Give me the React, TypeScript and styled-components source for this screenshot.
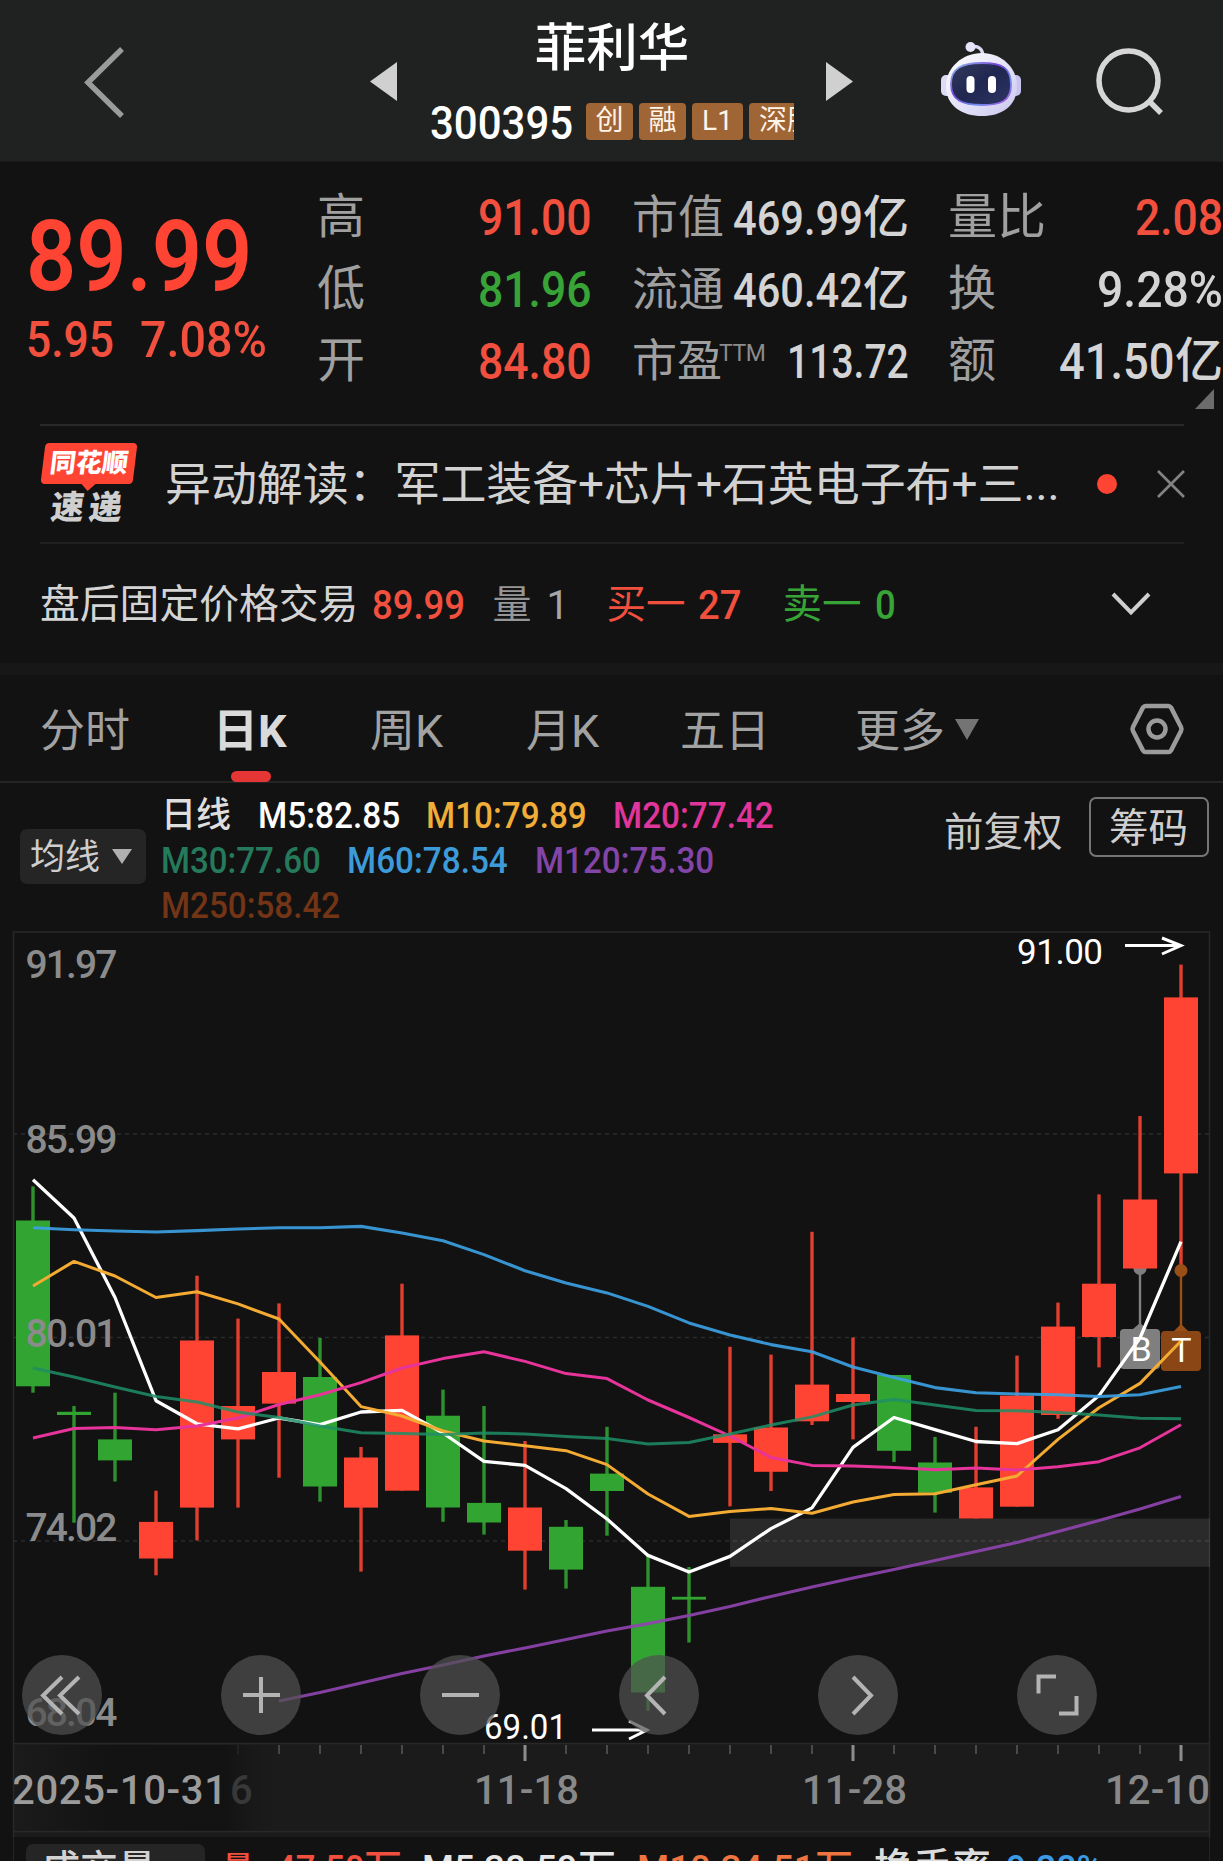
import React, { useLayoutEffect, useRef, useState } from 'react';
import styled, { createGlobalStyle } from 'styled-components';

const RED = '#ff4433';
const SOFT_RED = '#f2503f';
const GREEN = '#31a431';
const FONT = "Roboto, 'Noto Sans CJK SC', sans-serif";

const GlobalStyle = createGlobalStyle`
  body { margin: 0; background: #121212; overflow: hidden; }
  * { box-sizing: border-box; }
`;

const Page = styled.main`
  width: 1223px;
  height: 1861px;
  overflow: hidden;
  display: flex;
  flex-direction: column;
  background: #121212;
  color: #d2d2d2;
  font-family: ${FONT};
`;

/* ---------- text ---------- */

type TextProps = { $size: number; $color?: string; $weight?: number; $ml?: number; $up?: number; $mt?: number };

const Text = styled.span<TextProps>`
  display: block;
  flex: none;
  white-space: nowrap;
  line-height: 1;
  font-size: ${(p) => p.$size}px;
  font-weight: ${(p) => p.$weight ?? 400};
  color: ${(p) => p.$color ?? 'inherit'};
  margin-left: ${(p) => p.$ml ?? 0}px;
  margin-top: ${(p) => p.$mt ?? 0}px;
  margin-bottom: ${(p) => p.$up ?? 0}px;
`;

const FitBox = styled(Text)<{ $w: number }>`
  width: ${(p) => p.$w}px;
`;

const FitInner = styled.span`
  display: inline-block;
  transform-origin: 0 50%;
`;

type FitProps = { w: number; size: number; color?: string; weight?: number; ml?: number; mt?: number; up?: number; children: string };

/* Condenses a figure so that it always fills its column width. */
function Fit({ w, size, color, weight = 500, ml, mt, up, children }: FitProps) {
  const ref = useRef<HTMLSpanElement>(null);
  const [scale, setScale] = useState(1);
  useLayoutEffect(() => {
    if (ref.current) setScale(w / ref.current.offsetWidth);
  }, [w, size, children]);
  return (
    <FitBox $w={w} $size={size} $color={color} $weight={weight} $ml={ml} $mt={mt} $up={up}>
      <FitInner ref={ref} style={{ transform: `scaleX(${scale})` }}>{children}</FitInner>
    </FitBox>
  );
}

/* ---------- header ---------- */

const Header = styled.header`
  flex: none;
  height: 162px;
  background: #202221;
  border-bottom: 1px solid #1a1b1b;
  display: flex;
  align-items: flex-start;
`;

const Icon = styled.svg<{ $ml?: number; $mt?: number }>`
  display: block;
  flex: none;
  overflow: visible;
  margin-left: ${(p) => p.$ml ?? 0}px;
  margin-top: ${(p) => p.$mt ?? 0}px;
`;

const TitleBlock = styled.div`
  width: 364px;
  margin-left: 32px;
  padding-top: 23px;
  display: flex;
  flex-direction: column;
  align-items: center;
`;

const CodeRow = styled.div`
  width: 364px;
  height: 48px;
  margin-top: 23px;
  display: flex;
  align-items: center;
  overflow: hidden;
`;

const Tag = styled.span<{ $w: number; $ml: number }>`
  flex: none;
  width: ${(p) => p.$w}px;
  height: 37px;
  margin-left: ${(p) => p.$ml}px;
  border-radius: 4px;
  background: #a06534;
  color: #fff4e8;
  font-size: 28px;
  line-height: 35px;
  text-align: center;
  white-space: nowrap;
  overflow: hidden;
`;

const ClippedTag = styled(Tag)`
  border-radius: 4px 0 0 4px;
  text-align: left;
  padding-left: 10px;
`;

function Robot() {
  return (
    <Icon $ml={87} $mt={41} width="82" height="76" viewBox="0 0 82 76">
      <defs>
        <linearGradient id="shell" x1="0" y1="0" x2="1" y2="1">
          <stop offset="0" stopColor="#ffffff" />
          <stop offset=".55" stopColor="#e3e1f7" />
          <stop offset="1" stopColor="#c9c6ee" />
        </linearGradient>
        <linearGradient id="rim" x1="0" y1="0" x2="1" y2="1">
          <stop offset="0" stopColor="#8fc8f0" />
          <stop offset=".4" stopColor="#7a45d8" />
          <stop offset=".7" stopColor="#6a8cf0" />
          <stop offset="1" stopColor="#b04be0" />
        </linearGradient>
        <linearGradient id="visor" x1="0" y1="0" x2="1" y2="1">
          <stop offset="0" stopColor="#343a5c" />
          <stop offset=".5" stopColor="#202750" />
          <stop offset="1" stopColor="#2d3565" />
        </linearGradient>
      </defs>
      <path d="M30 6c7-2 12 2 12 10" fill="none" stroke="#dcdaf2" strokeWidth="3.5" />
      <circle cx="29.500" cy="6" r="5" fill="#e6e4fb" />
      <rect x="0" y="34" width="12" height="21" rx="5" fill="#dcdaf4" />
      <rect x="69" y="34" width="11" height="21" rx="5" fill="#c6c3ee" />
      <path d="M41 12C60 12 76 26 76 45C76 65 61 75 41 75C21 75 5 65 5 45C5 26 22 12 41 12Z" fill="url(#shell)" />
      <path d="M41 22C62 22 70 27 70 44C70 60 60 64 41 64C21 64 10 59 10 43C10 27 21 22 41 22Z" fill="url(#visor)" stroke="url(#rim)" strokeWidth="1.800" />
      <rect x="25.500" y="35" width="8" height="17" rx="4" fill="#fff" />
      <rect x="47" y="35" width="8" height="17" rx="4" fill="#fff" />
    </Icon>
  );
}

/* ---------- quote ---------- */

const Quote = styled.section`
  flex: none;
  height: 262px;
  padding: 19px 0 0 26px;
  display: flex;
`;

const PriceCol = styled.div`
  width: 291px;
  padding-top: 26px;
`;

const ChangeRow = styled.div`
  display: flex;
  margin-top: 9px;
`;

const StatCol = styled.div<{ $w: number; $gap?: number }>`
  width: ${(p) => p.$w}px;
  margin-left: ${(p) => p.$gap ?? 0}px;
`;

const StatRow = styled.div`
  height: 72px;
  display: flex;
  align-items: center;
  justify-content: space-between;
`;

const Group = styled.div`
  display: flex;
  align-items: center;
`;

const Ttm = styled.span`
  font-size: 23px;
  line-height: 1;
  color: #8c8c8c;
  letter-spacing: -0.5px;
  margin: 0 0 16px -3px;
`;

const CornerMark = styled.div`
  width: 0;
  height: 0;
  margin: -8px 9px 0 auto;
  border-left: 19px solid transparent;
  border-bottom: 20px solid #6c6c6c;
`;

/* ---------- news and after-hours ---------- */

const NewsRow = styled.section`
  flex: none;
  height: 120px;
  margin: 0 39px 0 40px;
  border-top: 2px solid #292929;
  border-bottom: 2px solid #202020;
  display: flex;
  align-items: center;
`;

const Logo = styled.div`
  width: 98px;
  height: 82px;
  margin-top: -1px;
  display: flex;
  flex-direction: column;
  align-items: center;
`;

const LogoTop = styled.div`
  position: relative;
  width: 92px;
  height: 41px;
  border-radius: 4px;
  background: ${RED};
  color: #fff;
  font-size: 26px;
  line-height: 41px;
  font-weight: 900;
  text-align: center;
  transform: skewX(-7deg);
  &::after {
    content: '';
    position: absolute;
    left: 40px;
    bottom: -7px;
    border: 8px solid transparent;
    border-top-color: ${RED};
    border-bottom: 0;
  }
`;

const LogoBottom = styled.div`
  color: #cfcfcf;
  font-size: 33px;
  line-height: 36px;
  margin-top: 6px;
  margin-right: 4px;
  font-weight: 900;
  letter-spacing: 5px;
  padding-left: 4px;
  transform: skewX(-7deg);
`;

const Dot = styled.i`
  width: 20px;
  height: 20px;
  border-radius: 50%;
  margin: -1px 0 0 37px;
  background: ${RED};
`;

const AfterHours = styled.section`
  flex: none;
  height: 119px;
  padding: 3px 0 0 40px;
  display: flex;
  align-items: center;
`;

const Band = styled.div`
  flex: none;
  height: 12px;
  background: #171717;
`;

/* ---------- tabs ---------- */

const Tabs = styled.nav`
  flex: none;
  height: 108px;
  border-bottom: 2px solid #252525;
  display: flex;
`;

const Tab = styled.div<{ $ml: number; $w: number; $active?: boolean }>`
  position: relative;
  flex: none;
  width: ${(p) => p.$w}px;
  margin-left: ${(p) => p.$ml}px;
  font-size: 45px;
  line-height: 113px;
  white-space: nowrap;
  color: ${(p) => (p.$active ? '#dadada' : '#a2a2a2')};
  font-weight: ${(p) => (p.$active ? 700 : 400)};
  &::after {
    content: '';
    display: ${(p) => (p.$active ? 'block' : 'none')};
    position: absolute;
    left: 18px;
    bottom: -1px;
    width: 40px;
    height: 11px;
    border-radius: 6px;
    background: #e63535;
  }
`;

const Caret = styled.i<{ $w: number; $h: number; $color: string; $ml: number; $mt?: number }>`
  width: 0;
  height: 0;
  margin-left: ${(p) => p.$ml}px;
  margin-top: ${(p) => p.$mt ?? 0}px;
  border: ${(p) => p.$w / 2}px solid transparent;
  border-bottom: 0;
  border-top: ${(p) => p.$h}px solid ${(p) => p.$color};
`;

/* ---------- legend ---------- */

const Legend = styled.section`
  flex: none;
  height: 148px;
  padding-top: 10px;
  display: flex;
  align-items: flex-start;
`;

const MaButton = styled.div`
  width: 126px;
  height: 55px;
  margin: 36px 0 0 20px;
  padding-left: 10px;
  border-radius: 7px;
  background: #252525;
  color: #cecece;
  display: flex;
  align-items: center;
`;

const MaList = styled.div`
  width: 760px;
  margin-left: 15px;
`;

const MaRow = styled.div`
  display: flex;
  align-items: center;
  height: 45px;
`;

const ChipButton = styled.div`
  width: 120px;
  height: 60px;
  margin: 4px 0 0 26px;
  border: 2px solid #757575;
  border-radius: 7px;
  display: flex;
  align-items: center;
  justify-content: center;
`;

/* ---------- chart ---------- */

const ChartWrap = styled.section`
  flex: none;
  position: relative;
  height: 906px;
`;

const ChartSvg = styled.svg`
  display: block;
  font-family: ${FONT};
`;

const Controls = styled.div`
  position: absolute;
  left: 21.5px;
  top: 724px;
  display: flex;
  gap: 119px;
`;

const RoundButton = styled.button`
  width: 80px;
  height: 80px;
  padding: 0;
  border: 0;
  border-radius: 50%;
  background: rgba(80, 80, 80, 0.72);
  svg { display: block; }
`;

const STEP = 41;
const X0 = 33;
const FLOOR = 1744;
const at = (i: number) => X0 + STEP * i;

type Candle = [up: 0 | 1, high: number, top: number, bottom: number, low: number];

const CANDLES: Candle[] = [
  [0, 1186.4, 1220.5, 1386.3, 1392.7],
  [0, 1406, 1411.8, 1415, 1522.7],
  [0, 1392.7, 1439.4, 1460.4, 1481.5],
  [1, 1490.7, 1521.9, 1558.5, 1575.3],
  [1, 1275.7, 1340.5, 1507.6, 1540.4],
  [1, 1318.6, 1406, 1439.4, 1507.6],
  [1, 1303.4, 1372, 1403.6, 1477.7],
  [0, 1338, 1377, 1486.5, 1501.7],
  [1, 1447, 1457.5, 1507.6, 1571.6],
  [1, 1283.7, 1335.4, 1490.7, 1490.7],
  [0, 1389.6, 1415.7, 1507.5, 1521.8],
  [0, 1406, 1502.9, 1522.5, 1534.6],
  [1, 1441, 1507.5, 1550.7, 1589.6],
  [0, 1520, 1526.8, 1569.6, 1588.6],
  [0, 1426.8, 1473.6, 1491, 1535.7],
  [0, 1556, 1586.8, 1692.5, 1710.7],
  [0, 1567, 1596.8, 1599.6, 1642.5],
  [1, 1346.8, 1434.3, 1442.9, 1506.4],
  [1, 1354.6, 1427.5, 1471.8, 1491],
  [1, 1231.8, 1384.6, 1421.3, 1425],
  [1, 1337.5, 1394, 1402, 1439.4],
  [0, 1375, 1375, 1450.8, 1462],
  [0, 1436.9, 1462.5, 1492.8, 1512.6],
  [1, 1426.8, 1487.4, 1518.5, 1518.5],
  [1, 1355.6, 1395.6, 1506.7, 1506.7],
  [1, 1302.6, 1326.6, 1415, 1418.8],
  [1, 1194.4, 1283.7, 1337, 1367.4],
  [1, 1116, 1199.5, 1268.5, 1268.5],
  [1, 964.6, 997.4, 1173.4, 1271.5],
];

type Line = { color: string; from: number; width: number; ys: number[] };

const LINES: Line[] = [
  { color: '#ffffff', from: 0, width: 3.3, ys: [1179.7, 1218, 1297.5, 1400.7, 1423.8, 1428.9, 1418, 1424.7, 1412, 1410.4, 1433, 1461.4, 1465.4, 1488.6, 1519, 1555.4, 1572, 1556.4, 1528.6, 1507.9, 1447.4, 1417.5, 1429.7, 1441.5, 1443.6, 1429.7, 1395.6, 1338, 1241.6] },
  { color: '#f3ab33', from: 0, width: 3, ys: [1286, 1261.4, 1276, 1297.5, 1291.7, 1303.9, 1319, 1362, 1406.6, 1416, 1431, 1441, 1445.7, 1450.7, 1464.6, 1494, 1516.4, 1511.4, 1508.6, 1513.2, 1502, 1494.5, 1493.7, 1484.8, 1476, 1439.4, 1407.8, 1383.4, 1341] },
  { color: '#e6349a', from: 0, width: 3, ys: [1438, 1428.5, 1427.6, 1429.7, 1426, 1418, 1404.5, 1394.8, 1382.6, 1368, 1358.6, 1351.8, 1361.4, 1373.6, 1378.6, 1400, 1417.5, 1436, 1457.5, 1465.4, 1466, 1467.6, 1469.7, 1468, 1470, 1466.8, 1461.7, 1447.8, 1424.7] },
  { color: 'rgba(30,142,102,.85)', from: 0, width: 3, ys: [1368, 1377, 1387, 1396.5, 1402, 1412, 1417.5, 1426, 1432.7, 1433.5, 1434.6, 1432.9, 1434, 1436.4, 1438.6, 1444, 1442.5, 1434, 1425, 1416.9, 1405, 1399.4, 1404.9, 1410.4, 1410.8, 1412.5, 1415, 1418.3, 1418.8] },
  { color: 'rgba(60,160,226,.92)', from: 0, width: 3.1, ys: [1227.7, 1229.8, 1231, 1232, 1230.6, 1229, 1227.7, 1227.7, 1226.4, 1233, 1240.7, 1254.6, 1270.7, 1282.9, 1292.9, 1306.4, 1322.9, 1335, 1344.6, 1351.8, 1367, 1377.5, 1387.6, 1392.7, 1394, 1394.8, 1396.5, 1394.8, 1386.4] },
  { color: 'rgba(142,68,173,.92)', from: 6, width: 3.1, ys: [1701, 1692.5, 1683, 1673.5, 1665, 1656, 1647.9, 1639.5, 1631, 1623.6, 1615.4, 1606.4, 1596.4, 1587, 1578, 1569.5, 1560.6, 1551.5, 1542.5, 1531.5, 1520.6, 1509, 1496.6] },
];

const PRICES: [string, number][] = [['91.97', 964], ['85.99', 1139], ['80.01', 1333], ['74.02', 1527], ['68.04', 1711.5]];

function Chart() {
  return (
    <ChartSvg width="1223" height="906" viewBox="0 931 1223 906">
      <defs>
        <linearGradient id="fade" x1="0" y1="0" x2="1" y2="0">
          <stop offset="0" stopColor="#1b1b1b" />
          <stop offset=".35" stopColor="#131313" />
          <stop offset=".78" stopColor="#121212" stopOpacity=".95" />
          <stop offset="1" stopColor="#1b1b1b" stopOpacity="0" />
        </linearGradient>
      </defs>
      <rect x="13" y={FLOOR} width="1197" height="93" fill="#1b1b1b" />
      {[1134, 1337.5, 1541].map((y) => (
        <line key={y} x1="13" x2="1210" y1={y} y2={y} stroke="#2c2c2c" strokeWidth="1.5" strokeDasharray="4 4" />
      ))}
      <rect x="13.500" y="932" width="1196" height="811.500" fill="none" stroke="#282828" strokeWidth="1.500" />
      <rect x="730" y="1518.600" width="480" height="48.200" fill="#fff" fillOpacity=".1" />

      <g fill="#7f7f7f">
        <circle cx={at(27)} cy="1268.500" r="6.500" />
        <rect x={at(27) - 1.2} y="1268" width="2.400" height="58" />
      </g>
      {CANDLES.map(([up, high, top, bottom, low], i) => (
        <g key={i} fill={up ? RED : GREEN}>
          <rect x={at(i) - 1.7} y={high} width="3.400" height={low - high} fillOpacity=".88" />
          <rect x={at(i) - 17} y={top} width="34" height={bottom - top} />
        </g>
      ))}
      <g fill="#9a4f17">
        <circle cx={at(28)} cy="1270.500" r="6.500" />
        <rect x={at(28) - 1.2} y="1270" width="2.400" height="56" />
        <path d="M1174 1331l7-7 7 7z" />
        <rect x="1161" y="1331" width="40" height="40" rx="4" fill="#8a4614" />
      </g>
      <path d="M1133 1329l7-6 7 6z" fill="#7f7f7f" />
      <rect x="1120" y="1329" width="40" height="40" rx="4" fill="#7f7f7f" />

      <g fill="#fff" fontSize="34" textAnchor="middle">
        <text x="1141" y="1361">B</text>
        <text x="1181.500" y="1362">T</text>
      </g>
      <g fill="#8b8b8b" fontSize="39" fontWeight="500">
        {PRICES.map(([label, y]) => (
          <text key={label} x="25.500" y={y + 14} textLength="92">{label}</text>
        ))}
      </g>
      {LINES.map(({ color, from, width, ys }) => (
        <polyline
          key={color}
          fill="none"
          stroke={color}
          strokeWidth={width}
          strokeLinejoin="round"
          points={ys.map((y, i) => `${at(from + i)},${y}`).join(' ')}
        />
      ))}

      <g fill="#fff" fontSize="35">
        <text x="1017" y="964" textLength="86">91.00</text>
        <text x="484" y="1738.500" textLength="83" lengthAdjust="spacingAndGlyphs">69.01</text>
      </g>
      <g fill="none" stroke="#fff" strokeWidth="3">
        <path d="M1125 945.500h56M1162 938l19 7.500l-19 8.500" />
        <path d="M592 1730h55M629 1721l18 9l-18 9" />
      </g>

      {CANDLES.map((_, i) => {
        const major = i === 12 || i === 20 || i === 28;
        return i > 4 ? (
          <rect key={i} x={at(i) - (major ? 1.5 : 1)} y="1745" width={major ? 3 : 2} height={major ? 16 : 9} fill={major ? '#8c8c8c' : '#4a4a4a'} />
        ) : null;
      })}
      <g fill="#888" fontSize="40" fontWeight="500">
        <text x="474" y="1803.500" textLength="105">11-18</text>
        <text x="802" y="1803.500" textLength="105">11-28</text>
        <text x="1105" y="1803.500" textLength="105">12-10</text>
      </g>
      <rect x="14" y="1745" width="271" height="86" fill="url(#fade)" />
      <text x="230" y="1803.500" fontSize="40" fontWeight="500" fill="#383838">6</text>
      <text x="12" y="1803.500" fontSize="40" fontWeight="500" fill="#9b9b9b" textLength="215">2025-10-31</text>
      <path d="M13.500 1744V1837M1209.500 1744V1837M13 1831.500H1210" stroke="#282828" strokeWidth="1.500" fill="none" />
    </ChartSvg>
  );
}

const CONTROL_PATHS = [
  'M40 22L21 40.500L40 59M57 22L38 40.500L57 59',
  'M40 22V58M22 40H59',
  'M22 40H59',
  'M46 22L28 40.500L46 59',
  'M35 22L53 40.500L35 59',
  'M21.500 38.500V21.500H39M42 58.500H59.500V41',
];

/* ---------- volume ---------- */

const VolumeRow = styled.section`
  flex: none;
  height: 24px;
  margin: 0 13px;
  border: solid #242424;
  border-width: 0 1px;
  overflow: hidden;
  display: flex;
  align-items: flex-start;
  padding: 7px 0 0 12px;
`;

const VolumeButton = styled.div`
  flex: none;
  width: 179px;
  height: 55px;
  padding: 6px 0 0 16px;
  border-radius: 7px;
  background: #252525;
`;

const VolumeValues = styled.div`
  display: flex;
  align-items: center;
  height: 48px;
`;

const LABEL = '#a0a0a0';
const VALUE = '#d4d4d4';

export default function App() {
  return (
    <Page>
      <GlobalStyle />
      <Header>
        <Icon $ml={84} $mt={47} width="41" height="71" viewBox="0 0 41 71" fill="none" stroke="#9b9b9b" strokeWidth="5.500">
          <path d="M38 2L4 35.500L38 69" />
        </Icon>
        <Icon $ml={245} $mt={62} width="28" height="39" viewBox="0 0 28 39"><path d="M27 0V39L0 19.500Z" fill="#d0d0d0" /></Icon>
        <TitleBlock>
          <Text $size={51.5} $weight={500} $color="#fff">菲利华</Text>
          <CodeRow>
            <Fit w={143} size={47} color="#fff" mt={2}>300395</Fit>
            <Tag $w={47} $ml={13}>创</Tag>
            <Tag $w={47} $ml={6}>融</Tag>
            <Tag $w={51} $ml={6}>L1</Tag>
            <ClippedTag $w={45} $ml={6}>深股通</ClippedTag>
          </CodeRow>
        </TitleBlock>
        <Icon $ml={32} $mt={62} width="28" height="39" viewBox="0 0 28 39"><path d="M0 0V39L27 19.500Z" fill="#d0d0d0" /></Icon>
        <Robot />
        <Icon $ml={73} $mt={48} width="70" height="70" viewBox="0 0 70 70" fill="none" stroke="#d6d6d6" strokeWidth="5.500">
          <circle cx="32.500" cy="32.500" r="29.500" />
          <path d="M54 54L65 65" />
        </Icon>
      </Header>

      <Quote>
        <PriceCol>
          <Fit w={226} size={99} color={RED} weight={600}>89.99</Fit>
          <ChangeRow>
            <Fit w={88} size={50} color={SOFT_RED}>5.95</Fit>
            <Fit w={127} size={50} color={SOFT_RED} ml={26}>7.08%</Fit>
          </ChangeRow>
        </PriceCol>
        <StatCol $w={275}>
          {[['高', '91.00', SOFT_RED], ['低', '81.96', '#38a438'], ['开', '84.80', SOFT_RED]].map(([k, v, c]) => (
            <StatRow key={k}>
              <Text $size={48} $color={LABEL}>{k}</Text>
              <Fit w={114} size={50} color={c} mt={2}>{v}</Fit>
            </StatRow>
          ))}
        </StatCol>
        <StatCol $w={277} $gap={40}>
          {[['市值', '469.99'], ['流通', '460.42']].map(([k, v]) => (
            <StatRow key={k}>
              <Text $size={46} $color={LABEL}>{k}</Text>
              <Group>
                <Fit w={130} size={49} color={VALUE} mt={2}>{v}</Fit>
                <Text $size={46} $color={VALUE} $weight={500}>亿</Text>
              </Group>
            </StatRow>
          ))}
          <StatRow>
            <Group>
              <Text $size={45} $color={LABEL}>市盈</Text>
              <Ttm>TTM</Ttm>
            </Group>
            <Fit w={122} size={48} color={VALUE} mt={1}>113.72</Fit>
          </StatRow>
        </StatCol>
        <StatCol $w={275} $gap={39}>
          <StatRow>
            <Text $size={49} $color={LABEL}>量比</Text>
            <Fit w={88} size={50} color={SOFT_RED} mt={2}>2.08</Fit>
          </StatRow>
          <StatRow>
            <Text $size={48} $color={LABEL}>换</Text>
            <Fit w={126} size={50} color={VALUE} mt={2}>9.28%</Fit>
          </StatRow>
          <StatRow>
            <Text $size={48} $color={LABEL}>额</Text>
            <Group>
              <Fit w={116} size={50} color={VALUE} mt={2}>41.50</Fit>
              <Text $size={48} $color={VALUE} $weight={500}>亿</Text>
            </Group>
          </StatRow>
          <CornerMark />
        </StatCol>
      </Quote>

      <NewsRow>
        <Logo>
          <LogoTop>同花顺</LogoTop>
          <LogoBottom>速递</LogoBottom>
        </Logo>
        <Fit w={895} size={46} weight={400} ml={28} up={1}>异动解读：军工装备+芯片+石英电子布+三...</Fit>
        <Dot />
        <Icon $ml={41} $mt={-1} width="26" height="26" viewBox="0 0 27 27" stroke="#828282" strokeWidth="2.800">
          <path d="M0 0L27 27M27 0L0 27" />
        </Icon>
      </NewsRow>

      <AfterHours>
        <Text $size={39.8} $color={VALUE}>盘后固定价格交易</Text>
        <Fit w={93} size={40} color={SOFT_RED} ml={14} mt={1}>89.99</Fit>
        <Text $size={39} $color="#969696" $ml={27}>量</Text>
        <Fit w={22} size={40} color="#a6a6a6" weight={400} ml={15} mt={1}>1</Fit>
        <Text $size={39.5} $color={SOFT_RED} $ml={38}>买一</Text>
        <Fit w={43} size={40} color={SOFT_RED} ml={13} mt={1}>27</Fit>
        <Text $size={39.5} $color="#38a438" $ml={41}>卖一</Text>
        <Fit w={21} size={40} color="#38a438" ml={14} mt={1}>0</Fit>
        <Icon $ml={216} $mt={-2} width="38" height="22" viewBox="0 0 38 22" fill="none" stroke="#cfcfcf" strokeWidth="4">
          <path d="M1 1L19 19.500L37 1" />
        </Icon>
      </AfterHours>
      <Band />

      <Tabs>
        <Tab $ml={40} $w={90}>分时</Tab>
        <Tab $ml={83} $w={74} $active>日K</Tab>
        <Tab $ml={83} $w={74}>周K</Tab>
        <Tab $ml={82} $w={74}>月K</Tab>
        <Tab $ml={80} $w={90}>五日</Tab>
        <Tab $ml={85} $w={90}>更多</Tab>
        <Caret $w={25} $h={21} $color="#747474" $ml={10} $mt={44} />
        <Icon $ml={151} $mt={28} width="54" height="52" viewBox="0 0 54 52" fill="none" stroke="#9b9b9b" strokeWidth="4.500">
          <path d="M15.500 3H38.500Q40 3 41 4.500L51 24Q52 26 51 28L41 47.500Q40 49 38.500 49H15.500Q14 49 13 47.500L3 28Q2 26 3 24L13 4.500Q14 3 15.500 3Z" />
          <circle cx="27" cy="26" r="8.500" />
        </Icon>
      </Tabs>

      <Legend>
        <MaButton>
          <Text $size={35} $mt={2}>均线</Text>
          <Caret $w={20} $h={15} $color="#b0b0b0" $ml={12} $mt={0} />
        </MaButton>
        <MaList>
          <MaRow>
            <Text $size={35} $color="#dedede" $weight={500}>日线</Text>
            <Fit w={142} size={36} color="#fff" ml={27}>M5:82.85</Fit>
            <Fit w={161} size={36} color="#f0ad38" ml={26}>M10:79.89</Fit>
            <Fit w={161} size={36} color="#e0359a" ml={26}>M20:77.42</Fit>
          </MaRow>
          <MaRow>
            <Fit w={160} size={36} color="#257a5b">M30:77.60</Fit>
            <Fit w={161} size={36} color="#3c9bd8" ml={26}>M60:78.54</Fit>
            <Fit w={179} size={36} color="#8445a8" ml={27}>M120:75.30</Fit>
          </MaRow>
          <MaRow>
            <Fit w={179} size={36} color="#733516">M250:58.42</Fit>
          </MaRow>
        </MaList>
        <Text $size={39.5} $color="#cacaca" $ml={23} $mt={20}>前复权</Text>
        <ChipButton><Text $size={39.5} $color="#cfcfcf" $mt={3}>筹码</Text></ChipButton>
      </Legend>

      <ChartWrap>
        <Chart />
        <Controls>
          {CONTROL_PATHS.map((d) => (
            <RoundButton key={d}>
              <svg width="80" height="80" viewBox="0 0 80 80" fill="none" stroke="#b4b4b4" strokeWidth="4">
                <path d={d} />
              </svg>
            </RoundButton>
          ))}
        </Controls>
      </ChartWrap>

      <VolumeRow>
        <VolumeButton><Text $size={38} $weight={500}>成交量</Text></VolumeButton>
        <VolumeValues>
          <Text $size={32} $color={SOFT_RED} $weight={500} $ml={17}>量</Text>
          <Fit w={88} size={37} color={SOFT_RED} ml={22}>47.50</Fit>
          <Text $size={38} $color={SOFT_RED} $weight={500}>万</Text>
          <Fit w={156} size={37} color="#e6e6e6" ml={20}>M5:38.59</Fit>
          <Text $size={38} $color="#e6e6e6" $weight={500}>万</Text>
          <Fit w={178} size={37} color="#ee7440" ml={21}>M10:34.51</Fit>
          <Text $size={38} $color="#ee7440" $weight={500}>万</Text>
          <Text $size={39} $color="#dcdcdc" $weight={500} $ml={21}>换手率</Text>
          <Fit w={97} size={37} color="#3c9be6" ml={15}>9.28%</Fit>
        </VolumeValues>
      </VolumeRow>
    </Page>
  );
}
